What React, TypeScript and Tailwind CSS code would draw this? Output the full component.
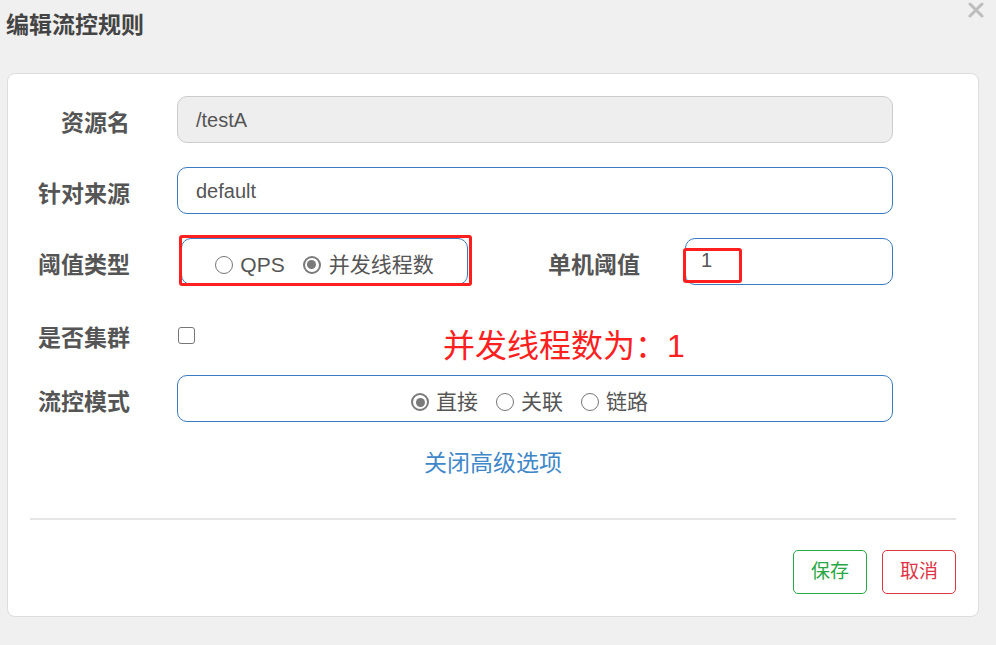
import React from "react";

const cjk = { fontFamily: '"Liberation Sans", "Noto Sans CJK SC", sans-serif' };

function Radio({ checked }: { checked?: boolean }) {
  if (checked) {
    return (
      <span className="flex h-[18px] w-[18px] shrink-0 items-center justify-center rounded-full border-2 border-[#7a7a7a] bg-white">
        <span className="block h-[9px] w-[9px] rounded-full bg-[#7a7a7a]" />
      </span>
    );
  }
  return <span className="block h-[18px] w-[18px] shrink-0 rounded-full border border-[#767676] bg-white" />;
}

function Label({ children, w = "w-[100px]" }: { children: React.ReactNode; w?: string }) {
  return (
    <div className={`${w} mt-[7px] shrink-0 text-right text-[23px] font-bold text-[#555555]`}>{children}</div>
  );
}

export default function App() {
  return (
    <div className="relative h-[645px] w-[996px] overflow-hidden bg-[#f0f0f0]" style={cjk}>
      <div className="flex h-[50px] items-center pl-[6px] text-[23px] font-bold text-[#444444]">编辑流控规则</div>
      <svg className="absolute left-[968px] top-[2px]" width="16" height="16" viewBox="0 0 16 16">
        <path d="M2 2 L14 14 M14 2 L2 14" stroke="#bdbdbd" strokeWidth="3" strokeLinecap="round" />
      </svg>

      <div className="relative ml-[7px] mt-[23px] h-[544px] w-[972px] rounded-[8px] border border-[#dddddd] bg-white px-[22px] pt-[22px]">
        {/* row 1 */}
        <div className="mb-[24px] flex h-[47px] items-center">
          <Label>资源名</Label>
          <div className="ml-[47px] flex h-[47px] w-[716px] items-center rounded-[10px] border border-[#cccccc] bg-[#eeeeee] pl-[18px] text-[20px] text-[#555555]">
            /testA
          </div>
        </div>
        {/* row 2 */}
        <div className="mb-[24px] flex h-[47px] items-center">
          <Label>针对来源</Label>
          <div className="ml-[47px] flex h-[47px] w-[716px] items-center rounded-[10px] border border-[#3a7bbf] bg-white pl-[18px] text-[20px] text-[#555555]">
            default
          </div>
        </div>
        {/* row 3 */}
        <div className="mb-[23px] flex h-[47px] items-center">
          <Label>阈值类型</Label>
          <div className="ml-[51px] flex h-[47px] w-[287px] items-center justify-center rounded-[10px] border border-[#3a7bbf] bg-white pt-[6px] text-[21px] text-[#555555]">
            <Radio />
            <span className="ml-[7px]">QPS</span>
            <span className="ml-[18px] flex">
              <Radio checked />
            </span>
            <span className="ml-[8px]">并发线程数</span>
          </div>
          <Label w="w-[172px]">单机阈值</Label>
          <div className="ml-[45px] flex h-[47px] w-[208px] items-center rounded-[10px] border border-[#3a7bbf] bg-white pb-[3px] pl-[15px] text-[20px] text-[#555555]">
            1
          </div>
        </div>
        {/* row 4 */}
        <div className="mb-[13px] flex h-[54px] items-center">
          <Label>是否集群</Label>
          <span className="ml-[48px] block h-[17px] w-[17px] rounded-[3px] border border-[#767676] bg-white" />
        </div>
        {/* row 5 */}
        <div className="flex h-[47px] items-center">
          <Label>流控模式</Label>
          <div className="ml-[47px] flex h-[47px] w-[716px] items-center justify-center rounded-[10px] border border-[#3a7bbf] bg-white pr-[11px] pt-[7px] text-[21px] text-[#555555]">
            <Radio checked />
            <span className="ml-[7px]">直接</span>
            <span className="ml-[18px] flex">
              <Radio />
            </span>
            <span className="ml-[7px]">关联</span>
            <span className="ml-[18px] flex">
              <Radio />
            </span>
            <span className="ml-[7px]">链路</span>
          </div>
        </div>
        {/* link */}
        <div className="mt-[26px] flex h-[30px] items-center justify-center text-[23px] text-[#3f87c9]">关闭高级选项</div>
        <div className="mt-[40px] h-[2px] w-[926px] bg-[#e5e5e5]" />
        <div className="mt-[30px] flex justify-end gap-[15px]">
          <button className="flex h-[44px] w-[74px] items-center justify-center rounded-[5px] border border-[#28a745] bg-white text-[19px] text-[#28a745]">
            保存
          </button>
          <button className="flex h-[44px] w-[74px] items-center justify-center rounded-[5px] border border-[#dc3545] bg-white text-[19px] text-[#dc3545]">
            取消
          </button>
        </div>

        {/* annotations */}
        <div className="absolute left-[171px] top-[161px] h-[51px] w-[293px] rounded-[3px] border-[3px] border-[#ff1f1f]" />
        <div className="absolute left-[675px] top-[174px] h-[35px] w-[59px] rounded-[3px] border-[3px] border-[#ff1f1f]" />
        <div className="absolute left-[435px] top-[252px] text-[32px] leading-[40px] text-[#ff2020]">并发线程数为：1</div>
      </div>
    </div>
  );
}
